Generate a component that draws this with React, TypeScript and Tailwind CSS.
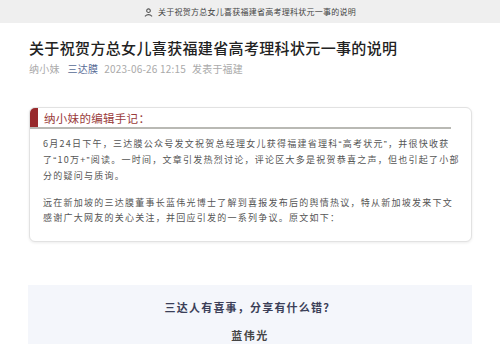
import React from "react";

const font = { fontFamily: '"Noto Sans CJK SC", "Noto Sans", sans-serif' };

function Q({ c }: { c: string }) {
  return <span style={{ fontFamily: '"Liberation Sans", sans-serif' }}>{c}</span>;
}

export default function App() {
  return (
    <div className="w-[500px] h-[344px] overflow-hidden bg-white" style={font}>
      {/* top bar */}
      <div className="h-[23px] bg-[#efefef] flex items-center justify-center gap-[5px] text-[#444]">
        <svg width="9" height="9" viewBox="0 0 10 10" className="mt-[1px]">
          <circle cx="5" cy="3" r="2" fill="none" stroke="#555" strokeWidth="1.2" />
          <path d="M1 9.2 Q5 5.5 9 9.2" fill="none" stroke="#555" strokeWidth="1.2" />
        </svg>
        <span className="text-[8px] tracking-[0.25px] leading-none">关于祝贺方总女儿喜获福建省高考理科状元一事的说明</span>
      </div>

      {/* title */}
      <div className="pl-[29px] pt-[15px]">
        <h1 className="text-[15px] leading-[20px] tracking-[0.35px] text-[#222] font-medium">
          关于祝贺方总女儿喜获福建省高考理科状元一事的说明
        </h1>
        <div className="mt-[4px] flex items-center text-[10px] leading-[14px] text-[#aaa] tracking-[0.2px]">
          <span>纳小妹</span>
          <span className="ml-[8px] text-[#576b95]">三达膜</span>
          <span className="ml-[6px]">2023-06-26 12:15</span>
          <span className="ml-[6px]">发表于福建</span>
        </div>
      </div>

      {/* card */}
      <div className="ml-[29px] mt-[31px] w-[443px] h-[135px] rounded-[6px] border border-[#e2e2e2] shadow-[0_1px_3px_rgba(0,0,0,0.08)] bg-white overflow-hidden">
        <div className="flex items-stretch h-[21px] w-[421px] border-b-2 border-[#b9b9b4]">
          <div className="w-[8px] bg-[#982a2c]" />
          <div className="pl-[6px] text-[11.5px] leading-[21px] text-[#9a3b3b] tracking-[0.3px]">纳小妹的编辑手记：</div>
        </div>
        <div className="pl-[13px] pt-[7px] text-[9px] leading-[15px] tracking-[1.25px] text-[#555] whitespace-nowrap">
          <div>6月24日下午，三达膜公众号发文祝贺总经理女儿获得福建省理科<Q c="“" />高考状元<Q c="”" />，并很快收获</div>
          <div>了<Q c="“" />10万+<Q c="”" />阅读。一时间，文章引发热烈讨论，评论区大多是祝贺恭喜之声，但也引起了小部</div>
          <div>分的疑问与质询。</div>
          <div className="mt-[12px]">远在新加坡的三达膜董事长蓝伟光博士了解到喜报发布后的舆情热议，特从新加坡发来下文</div>
          <div>感谢广大网友的关心关注，并回应引发的一系列争议。原文如下：</div>
        </div>
      </div>

      {/* bottom box */}
      <div className="ml-[28px] mt-[43px] w-[444px] h-[80px] bg-[#f4f6fb] flex flex-col items-center pt-[13px]">
        <div className="text-[11px] leading-[18px] font-bold tracking-[1.2px] text-[#3b3f58]">三达人有喜事，分享有什么错？</div>
        <div className="mt-[11px] text-[11px] leading-[16px] font-bold tracking-[1.5px] text-[#444]">蓝伟光</div>
      </div>
    </div>
  );
}
